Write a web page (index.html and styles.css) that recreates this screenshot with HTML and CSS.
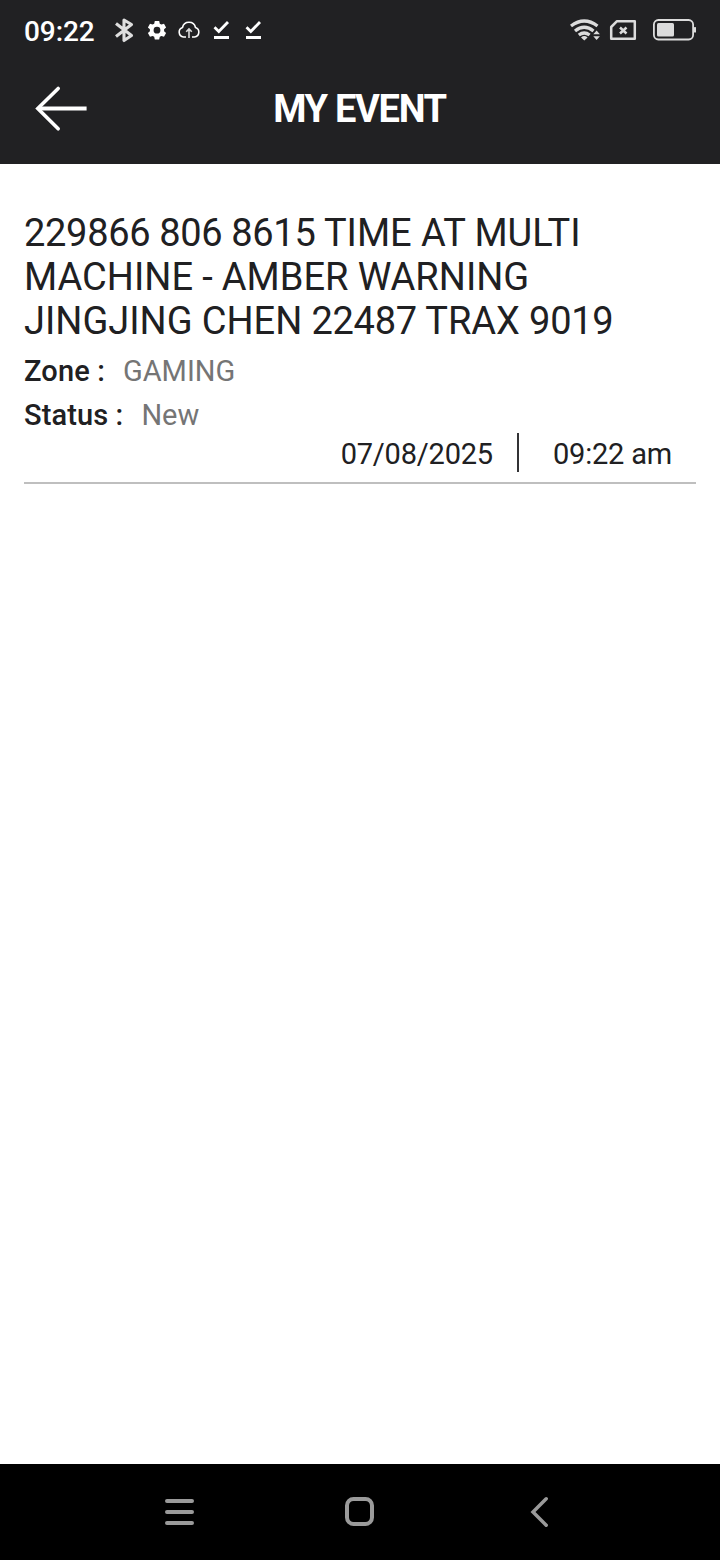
FILE: index.html
```html
<!DOCTYPE html>
<html lang="en">
<head>
<meta charset="utf-8">
<title>My Event</title>
<link rel="stylesheet" href="styles.css">
</head>
<body>
<div class="screen">
  <div class="status-bar">
    <span class="clock">09:22</span>
    <svg class="notifications" width="152" height="28" viewBox="112 16 152 28">
      <path d="M116 23.5L131.5 35.5L124 40.5V20L131.5 24.5L116 36.5" fill="none" stroke="#dedede" stroke-width="3.1" stroke-linejoin="round"/>
      <g fill="#fff">
        <path fill-rule="evenodd" d="M154.8 21h4.4l.6 2.7 1.6.9 2.6-.8 2.1 3.7-2 1.8v1.9l2 1.8-2.1 3.7-2.6-.8-1.6.9-.6 2.7h-4.4l-.6-2.7-1.6-.9-2.6.8-2.1-3.7 2-1.8v-1.9l-2-1.8 2.1-3.7 2.6.8 1.6-.9zM157 26.8a3.4 3.4 0 1 0 0 6.8a3.4 3.4 0 1 0 0-6.8z"/>
        <rect x="214" y="36" width="15" height="3"/>
        <rect x="246" y="36" width="15" height="3"/>
      </g>
      <path d="M186 37H183.5A4.9 4.9 0 0 1 182.5 27.5C184 20.5 194 20.5 195.5 27.5A4.9 4.9 0 0 1 194.5 37H192" fill="none" stroke="#fff" stroke-width="1.6"/>
      <path d="M189 38V29.5M186.2 31.8L189 29L191.8 31.8" fill="none" stroke="#ddd" stroke-width="1.6"/>
      <path d="M214.5 27.3L218.8 31.5L228 22M246.5 27.3L250.8 31.5L260 22" fill="none" stroke="#fff" stroke-width="2.8"/>
    </svg>
    <svg class="indicators" width="130" height="28" viewBox="568 16 130 28">
      <g fill="none" stroke="#dcdcdc">
        <path d="M571 26Q584.2 16 597.5 26M575 31Q584.2 23.6 593.5 31M578.8 35Q584.2 31 589.6 35" stroke-width="3.3"/>
        <path d="M617 21.2H634.8V38.8H611.2V27Z" stroke-width="2.5" stroke-linejoin="round"/>
        <path d="M620 27.5L626.5 33.5M626.5 27.5L620 33.5" stroke-width="2.5"/>
        <rect x="653.9" y="20" width="39.2" height="19.5" rx="4.5" stroke-width="1.8"/>
      </g>
      <g fill="#dcdcdc">
        <path d="M581 37.4Q584.3 34.8 587.6 37.4L584.3 40.5ZM593.3 34.3L596.6 30.5L599.9 34.3ZM593.3 36.2L596.6 40L599.9 36.2Z"/>
        <rect x="657" y="23" width="17" height="13.5" rx="1.5"/>
        <rect x="694" y="27" width="2" height="5.5" rx=".6"/>
      </g>
    </svg>
  </div>
  <header class="app-bar">
    <svg class="back" width="56" height="48" viewBox="34 84 56 48" fill="none" stroke="#fff">
      <path d="M86.6 108.5H38" stroke-width="4"/>
      <path d="M58.2 88.5L37.8 108.5L58.2 128.8" stroke-width="3.6" stroke-linecap="round"/>
    </svg>
    <h1 class="heading">MY EVENT</h1>
  </header>
  <main class="content">
    <article class="event">
      <h2 class="event-title"><span class="num">229866 806 8615</span> TIME AT MULTI<br>MACHINE - AMBER WARNING<br>JINGJING CHEN <span class="num">22487</span> TRAX <span class="num">9019</span></h2>
      <p class="field"><span class="label">Zone :</span><span class="value">GAMING</span></p>
      <p class="field"><span class="label">Status :</span><span class="value">New</span></p>
      <div class="when"><span>07/08/2025</span><span class="divider"></span><span>09:22 am</span></div>
    </article>
  </main>
  <nav class="nav-bar">
    <svg width="32" height="32" viewBox="164 1496 32 32" stroke="#9a9a9a" stroke-width="4" stroke-linecap="round"><path d="M167 1501H192M167 1512H192M167 1523H192"/></svg>
    <svg width="32" height="32" viewBox="344 1496 32 32" fill="none" stroke="#9a9a9a" stroke-width="4"><rect x="347" y="1499" width="25" height="25" rx="6.5"/></svg>
    <svg width="32" height="32" viewBox="524 1496 32 32" fill="none" stroke="#9a9a9a" stroke-width="3.5" stroke-linecap="round"><path d="M546.2 1498.8L533 1512L546.2 1525.2"/></svg>
  </nav>
</div>
</body>
</html>
```
FILE: styles.css
```css
body {
  margin: 0;
  background: #fff;
  color: #202022;
  font-family: Roboto, sans-serif;
}
svg { display: block; }
.screen {
  display: flex;
  flex-direction: column;
  width: 720px;
  height: 1560px;
}
.status-bar {
  display: flex;
  box-sizing: border-box;
  height: 60px;
  padding: 16px 22px 0 24px;
  background: #212123;
  color: #fff;
}
.clock {
  width: 88px;
  font-size: 28px;
  font-weight: 500;
  line-height: 31px;
  letter-spacing: -.1px;
  white-space: nowrap;
}
.indicators { margin-left: auto; }
.app-bar {
  display: grid;
  grid-template-columns: 56px 1fr 56px;
  box-sizing: border-box;
  height: 104px;
  padding: 24px 35px 0 34px;
  background: #212123;
  color: #fff;
}
.heading {
  margin: 0;
  font-size: 38px;
  font-weight: 700;
  line-height: 50px;
  letter-spacing: -1.3px;
  text-align: center;
}
.content { flex: 1; padding: 47px 24px 0; }
.event { border-bottom: 2px solid #bfbfbf; }
.event-title {
  margin: 0 0 6px;
  font-size: 38px;
  font-weight: 400;
  line-height: 44px;
  word-spacing: -.25px;
  white-space: nowrap;
}
.num { letter-spacing: -.3px; }
.field {
  display: flex;
  margin: 0;
  font-size: 29px;
  line-height: 44px;
}
.label { font-weight: 500; letter-spacing: .12px; }
.value { margin-left: 18px; color: #757575; }
.when {
  display: flex;
  justify-content: flex-end;
  height: 50px;
  margin-top: -5px;
  padding-right: 24px;
  font-size: 29px;
  line-height: 44px;
  letter-spacing: -.2px;
}
.divider {
  width: 2px;
  height: 39px;
  margin: 1px 34px 0 24px;
  background: #333335;
}
.nav-bar {
  display: flex;
  justify-content: center;
  gap: 148px;
  box-sizing: border-box;
  height: 96px;
  padding-top: 32px;
  background: #000;
}
```
